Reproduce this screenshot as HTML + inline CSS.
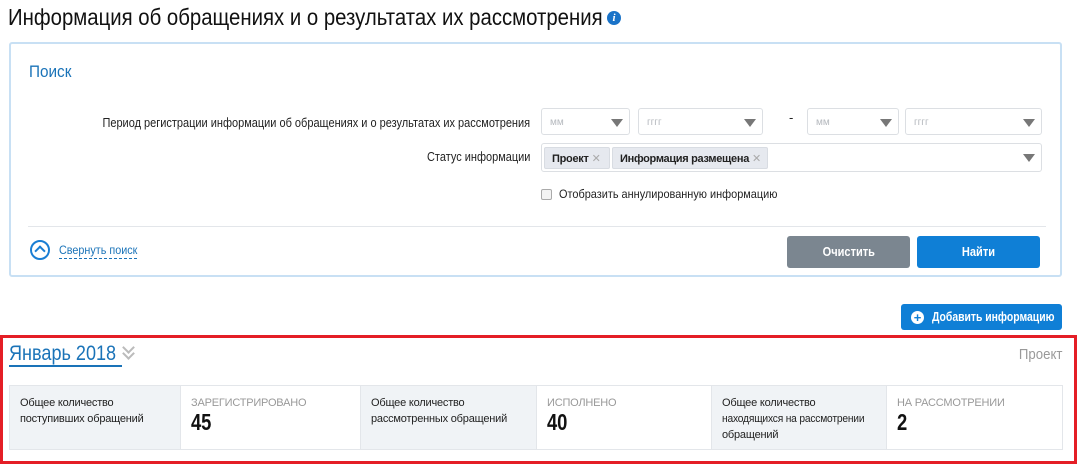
<!DOCTYPE html>
<html><head><meta charset="utf-8"><style>
*{box-sizing:border-box;margin:0;padding:0}
body{width:1081px;height:472px;background:#fff;position:relative;overflow:hidden;font-family:"Liberation Sans",sans-serif;color:#222}
.a{position:absolute;white-space:nowrap}
.n{display:inline-block;transform-origin:left center}
.r{display:inline-block;transform-origin:right center}
.sel{position:absolute;border:1px solid #dcdfe3;border-radius:3px;height:27px;top:108px;font-size:10px;color:#b5b9be;padding:8px 8px}
.tri{position:absolute;right:6px;top:10px;width:0;height:0;border-left:6px solid transparent;border-right:6px solid transparent;border-top:8px solid #777}
.chip{position:absolute;top:3px;height:22px;background:#e6e9ef;border:1px solid #d8dce2;border-radius:2px;font-size:11px;font-weight:bold;color:#222;padding:4px 7px;letter-spacing:-0.3px}
.chip span{color:#aaa;font-weight:normal;margin-left:3px}
.cell{position:absolute;top:385px;height:65px;border:1px solid #e3e6ea;font-size:11px;line-height:16px;padding:9px 10px;white-space:nowrap;letter-spacing:-0.2px}
.g{background:#f0f3f6}
.lab{color:#999;font-size:11px}
.num{font-weight:bold;font-size:23px;color:#111;margin-top:3px;display:inline-block;transform:scaleX(0.8);transform-origin:left}
</style></head><body>
<div class="a" style="left:8px;top:4px;font-size:23px;color:#111"><span class="n" style="transform:scaleX(0.885)">Информация об обращениях и о результатах их рассмотрения</span></div>
<div class="a" style="left:607px;top:11px;width:14px;height:14px;border-radius:50%;background:#1a73c8;color:#fff;font-size:11px;font-weight:bold;font-style:italic;text-align:center;line-height:14px;font-family:'Liberation Serif',serif">i</div>

<div class="a" style="left:9px;top:42px;width:1053px;height:235px;border:2px solid #c8e0f4;border-radius:3px"></div>
<div class="a" style="left:29px;top:62px;font-size:17px;color:#1a73b8"><span class="n" style="transform:scaleX(0.9)">Поиск</span></div>
<div class="a" style="right:551px;top:115px;font-size:13px;color:#222"><span class="r" style="transform:scaleX(0.845)">Период регистрации информации об обращениях и о результатах их рассмотрения</span></div>
<div class="sel" style="left:541px;width:89px">мм<i class="tri"></i></div>
<div class="sel" style="left:638px;width:125px">гггг<i class="tri"></i></div>
<div class="a" style="left:789px;top:110px;font-size:13px">-</div>
<div class="sel" style="left:807px;width:92px">мм<i class="tri"></i></div>
<div class="sel" style="left:905px;width:137px">гггг<i class="tri"></i></div>

<div class="a" style="right:551px;top:149px;font-size:13px;color:#222"><span class="r" style="transform:scaleX(0.845)">Статус информации</span></div>
<div class="a" style="left:541px;top:143px;width:501px;height:29px;border:1px solid #dcdfe3;border-radius:3px">
<div class="chip" style="left:2px;width:66px">Проект<span>✕</span></div>
<div class="chip" style="left:70px;width:156px">Информация размещена<span>✕</span></div>
<i class="tri" style="top:10px"></i></div>

<div class="a" style="left:541px;top:189px;width:11px;height:11px;border:1px solid #aaa;border-radius:2px;background:#f3f3f3"></div>
<div class="a" style="left:559px;top:187px;font-size:12px"><span class="n" style="transform:scaleX(0.91)">Отобразить аннулированную информацию</span></div>

<div class="a" style="left:28px;top:226px;width:1018px;height:1px;background:#e3e6ea"></div>
<div class="a" style="left:30px;top:240px;width:20px;height:20px;border:2px solid #1a7ed4;border-radius:50%"></div>
<div class="a" style="left:36px;top:247px;width:8px;height:8px;border-left:2px solid #1a7ed4;border-top:2px solid #1a7ed4;transform:rotate(45deg)"></div>
<div class="a" style="left:59px;top:243px;width:78px;height:16px;border-bottom:1px dashed #1a73b8"></div>
<div class="a" style="left:59px;top:243px;font-size:12px;color:#1a73b8"><span class="n" style="transform:scaleX(0.9)">Свернуть поиск</span></div>

<div class="a" style="left:787px;top:236px;width:123px;height:32px;background:#7b8690;border-radius:3px;color:#fff;font-size:13px;font-weight:bold;text-align:center;line-height:32px"><span style="display:inline-block;transform:scaleX(0.85)">Очистить</span></div>
<div class="a" style="left:917px;top:236px;width:123px;height:32px;background:#0f7fd6;border-radius:3px;color:#fff;font-size:13px;font-weight:bold;text-align:center;line-height:32px"><span style="display:inline-block;transform:scaleX(0.85)">Найти</span></div>

<div class="a" style="left:901px;top:304px;width:161px;height:26px;background:#0f7fd6;border-radius:3px;color:#fff;font-size:13px;font-weight:bold;line-height:26px;padding-left:31px"><span class="n" style="transform:scaleX(0.8)">Добавить информацию</span></div>
<div class="a" style="left:911px;top:311px;width:13px;height:13px;border-radius:50%;background:#fff;color:#0f7fd6;font-size:13px;font-weight:bold;text-align:center;line-height:13px">+</div>

<div class="a" style="left:0;top:335px;width:1077px;height:129px;border:3px solid #e41e26"></div>
<div class="a" style="left:9px;top:342px;width:113px;height:25px;border-bottom:2px solid #1a73b8"></div>
<div class="a" style="left:9px;top:342px;font-size:21px;color:#1a73b8;line-height:24px"><span class="n" style="transform:scaleX(0.86)">Январь 2018</span></div>
<div class="a" style="left:124px;top:343px;width:9px;height:9px;border-right:2px solid #bbb;border-bottom:2px solid #bbb;transform:rotate(45deg)"></div>
<div class="a" style="left:124px;top:349px;width:9px;height:9px;border-right:2px solid #bbb;border-bottom:2px solid #bbb;transform:rotate(45deg)"></div>
<div class="a" style="right:19px;top:346px;font-size:15px;color:#999"><span class="r" style="transform:scaleX(0.88)">Проект</span></div>

<div class="cell g" style="left:9px;width:172px">Общее количество<br>поступивших обращений</div>
<div class="cell" style="left:180px;width:181px"><div class="lab">ЗАРЕГИСТРИРОВАНО</div><div class="num">45</div></div>
<div class="cell g" style="left:360px;width:177px">Общее количество<br>рассмотренных обращений</div>
<div class="cell" style="left:536px;width:176px"><div class="lab">ИСПОЛНЕНО</div><div class="num">40</div></div>
<div class="cell g" style="left:711px;width:176px">Общее количество<br><span class="n" style="transform:scaleX(0.93)">находящихся на рассмотрении</span><br>обращений</div>
<div class="cell" style="left:886px;width:177px"><div class="lab">НА РАССМОТРЕНИИ</div><div class="num">2</div></div>
</body></html>
